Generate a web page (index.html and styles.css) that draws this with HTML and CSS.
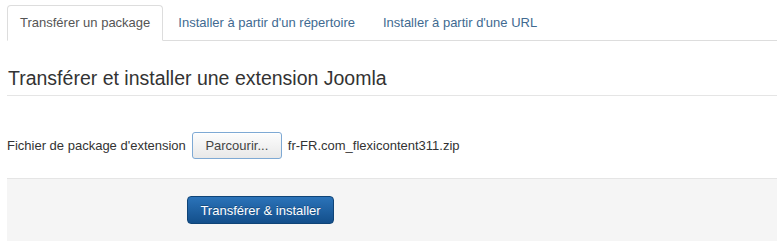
FILE: index.html
```html
<!DOCTYPE html>
<html lang="fr">
<head>
    <meta charset="UTF-8">
    <title>Installer une extension</title>
    <link rel="stylesheet" href="styles.css">
</head>
<body>
    <div class="container">
        <ul class="nav-tabs">
            <li class="active"><a href="#">Transférer un package</a></li>
            <li><a href="#">Installer à partir d'un répertoire</a></li>
            <li><a href="#">Installer à partir d'une URL</a></li>
        </ul>

        <div class="legend">Transférer et installer une extension Joomla</div>

        <div class="control-group">
            <label class="control-label">Fichier de package d'extension</label>
            <span class="file-btn">Parcourir...</span>
            <span class="file-name">fr-FR.com_flexicontent311.zip</span>
        </div>

        <div class="form-actions">
            <button class="btn-primary">Transférer &amp; installer</button>
        </div>
    </div>
</body>
</html>
```
FILE: styles.css
```css
* {
    margin: 0;
    padding: 0;
    box-sizing: border-box;
}

body {
    font-family: 'Liberation Sans', Arial, sans-serif;
    font-size: 13px;
    color: #333;
    background: #fff;
    overflow: hidden;
}

.container {
    padding: 5px 0 0 7px;
}

.nav-tabs {
    list-style: none;
    display: flex;
    border-bottom: 1px solid #ddd;
    margin-bottom: 18px;
}

.nav-tabs li {
    margin-bottom: -1px;
}

.nav-tabs a {
    display: block;
    padding: 8px 12px;
    line-height: 18px;
    border: 1px solid transparent;
    border-radius: 4px 4px 0 0;
    color: #416a91;
    text-decoration: none;
    margin-right: 2px;
}

.nav-tabs .active a {
    color: #555;
    background: #fff;
    border-color: #ddd #ddd transparent;
}

.legend {
    font-size: 19.5px;
    line-height: 36px;
    color: #333;
    border-bottom: 1px solid #e5e5e5;
    padding: 1px 0 0 1px;
    height: 37px;
}

.control-group {
    display: flex;
    align-items: center;
    padding: 18px 0 19px 0;
    margin-top: 18px;
}

.control-label {
    margin-right: 6px;
}

.file-btn {
    display: inline-block;
    width: 90px;
    height: 27px;
    line-height: 25px;
    text-align: center;
    color: #444;
    background: linear-gradient(#fdfdfd, #e8e8e8);
    border: 1px solid #7ea9d4;
    border-radius: 3px;
    box-shadow: inset 0 1px 0 #fff;
}

.file-name {
    margin-left: 6px;
}

.form-actions {
    background: #f5f5f5;
    border-top: 1px solid #e5e5e5;
    padding: 17px 20px 18px 180px;
    height: 64px;
}

.btn-primary {
    font-family: 'Liberation Sans', Arial, sans-serif;
    font-size: 13px;
    color: #fff;
    width: 147px;
    height: 28px;
    background: linear-gradient(#2b73b9, #134f8b);
    border: 1px solid #0f4477;
    border-radius: 4px;
    text-shadow: 0 -1px 0 rgba(0, 0, 0, 0.25);
    cursor: pointer;
}
```
